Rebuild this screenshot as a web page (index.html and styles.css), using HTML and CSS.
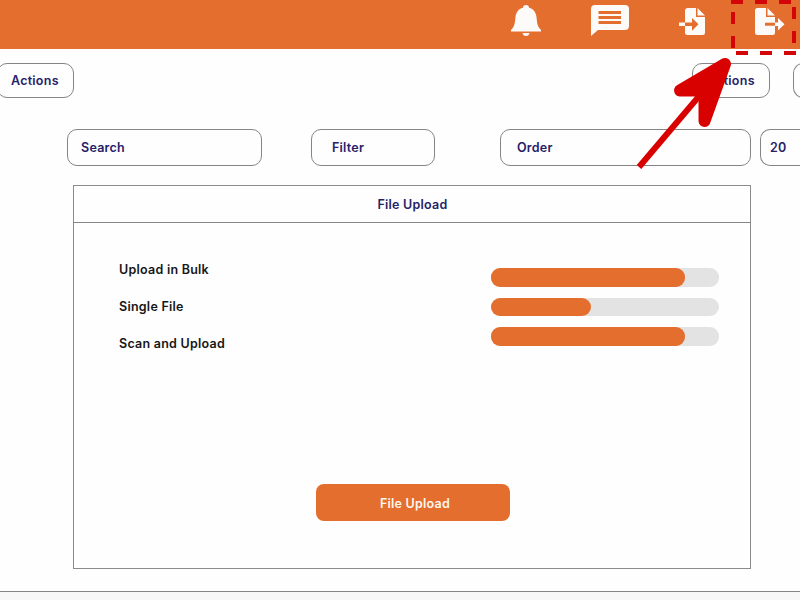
FILE: index.html
```html
<!DOCTYPE html>
<html lang="en">
<head>
<meta charset="utf-8">
<title>File Upload</title>
<link rel="stylesheet" href="styles.css">
</head>
<body>
<header class="topbar">
  <svg class="icon bell" width="30" height="32" viewBox="0 0 30 32"><path d="M15 0c1.800 0 3 1 3 2.700 4.800 1.300 7 4.800 7.500 9.300.6 6.500 1 9.800 4.500 13v1.500H0V25c3.500-3.200 3.900-6.500 4.500-13C5 7.500 7.200 4 12 2.700 12 1 13.200 0 15 0zM11.500 28h7c-.5 2-1.500 3-3.500 3s-3-1-3.500-3z"/></svg>
  <svg class="icon chat" width="38" height="31" viewBox="0 0 38 31"><path fill-rule="evenodd" d="M4 0h30q4 0 4 4v17q0 4-4 4H7l-7 6V4q0-4 4-4zM7.500 6v3H30V6zm0 5v3H30v-3zm0 5v3H30v-3z"/></svg>
  <svg class="icon import" width="26" height="27" viewBox="0 0 26 27"><path d="M9 0h8v9h9v15.500q0 2.500-2.500 2.500h-15Q6 27 6 24.500V2.500Q6 0 9 0zM18.500 0L26 7.500h-7.500z"/><path class="cut" d="M6 14.500h7V10l6.500 6.200-6.500 6.500V18H6z"/><path d="M0 14.500h6v3.500H0z"/></svg>
  <svg class="icon export" width="30" height="27" viewBox="0 0 30 27"><path d="M2.500 0H11v9h9v15.500q0 2.500-2.500 2.500h-15Q0 27 0 24.500V2.500Q0 0 2.500 0zM12.500 0L20 7.500h-7.500z"/><path class="cut" d="M10 14.700h10v3H10z"/><path d="M20 14.500h3V10l6.500 6.200L23 22.500V18h-3z"/></svg>
</header>
<main class="page">
  <div class="row actions">
    <button class="box action">Actions</button>
    <button class="box action second">Actions</button>
    <button class="box action third"></button>
  </div>
  <div class="row filters">
    <div class="box search">Search</div>
    <div class="box filter">Filter</div>
    <div class="box order">Order</div>
    <div class="box count">20</div>
  </div>
  <section class="panel">
    <h1 class="title">File Upload</h1>
    <div class="content">
      <ul class="labels"><li>Upload in Bulk</li><li>Single File</li><li>Scan and Upload</li></ul>
      <div class="bars">
        <div class="bar"><div class="fill" style="width:85.1%"></div></div>
        <div class="bar"><div class="fill" style="width:44%"></div></div>
        <div class="bar"><div class="fill" style="width:85.1%"></div></div>
      </div>
    </div>
    <button class="upload">File Upload</button>
  </section>
</main>
<footer class="footer"></footer>
<svg class="overlay" width="800" height="600" viewBox="0 0 800 600">
  <path class="dash" d="M731 2h12M755 2h12M779 2h12M733 12v12M733 36v12M794 7v12M794 31v12M736 53h12M760 53h12M784 53h12"/>
  <path class="shaft" d="M639 167L706 88"/>
  <path class="head" d="M725 64L680 90.500H704.500V121z"/>
</svg>
</body>
</html>
```

FILE: styles.css
```css
* { box-sizing: border-box; }
body { margin: 0; width: 800px; height: 600px; overflow: hidden; position: relative; background: #fefefe; font: 600 12.5px/16px Inter, "Open Sans", sans-serif; letter-spacing: .25px; color: #252268; display: flex; flex-direction: column; }
button { font: inherit; letter-spacing: inherit; color: inherit; }
.topbar { height: 49px; flex: none; background: #e46e2e; display: flex; align-items: flex-start; }
.icon { fill: #fdfbf9; flex: none; }
.icon .cut { fill: #e46e2e; }
.bell { margin: 5px 0 0 511px; }
.chat { margin: 5px 0 0 50px; }
.import { margin: 8px 0 0 50px; }
.export { margin: 8px 0 0 50px; }
.page { flex: none; height: 542px; }
.row { display: flex; width: 800px; overflow: hidden; }
.box { border: 1px solid #858585; border-radius: 10px; background: #fefefe; display: flex; align-items: center; flex: none; height: 37px; padding: 0; }
.actions { padding-top: 14px; }
.box.action { height: 35px; width: 77px; margin-left: -3px; padding-left: 13px; }
.box.second { width: 78px; margin-left: 618px; padding-left: 14px; }
.box.third { width: 7px; margin-left: 23px; border-right: 0; border-radius: 10px 0 0 10px; }
.filters { padding: 31px 0 0 67px; }
.search { width: 195px; padding-left: 13px; }
.filter { width: 124px; margin-left: 49px; padding-left: 20px; }
.order { width: 251px; margin-left: 65px; padding-left: 16px; }
.count { width: 40px; margin-left: 9px; padding-left: 9px; border-right: 0; border-radius: 10px 0 0 10px; }
.panel { width: 678px; height: 384px; margin: 19px 0 0 73px; border: 1px solid #8b8b8b; }
.title { margin: 0; padding-left: 1px; font: inherit; line-height: 38px; height: 37px; border-bottom: 1px solid #858585; text-align: center; }
.content { display: flex; justify-content: space-between; padding: 39px 31px 0 45px; height: 261px; color: #161616; }
.labels { margin: 0; padding: 0; list-style: none; }
.labels li { height: 37px; }
.bars { width: 228px; padding-top: 6px; display: flex; flex-direction: column; gap: 11px; }
.bar { height: 18.700px; border-radius: 9px; background: #e3e3e3; flex: none; }
.fill { height: 100%; border-radius: 9px; background: #e46e2e; }
.upload { display: block; width: 194px; height: 37px; margin: 0 auto 0 242px; padding: 2px 0 0 4px; border: 0; border-radius: 8px; background: #e46e2e; color: #fdf6ef; }
.footer { flex: 1; border-top: 1px solid #858585; background: #f7f7f7; }
.overlay { position: absolute; left: 0; top: 0; pointer-events: none; }
.dash { fill: none; stroke: #d20608; stroke-width: 4; }
.shaft { stroke: #d90000; stroke-width: 6; }
.head { fill: #d90000; stroke: #d90000; stroke-width: 12; stroke-linejoin: round; }
```
